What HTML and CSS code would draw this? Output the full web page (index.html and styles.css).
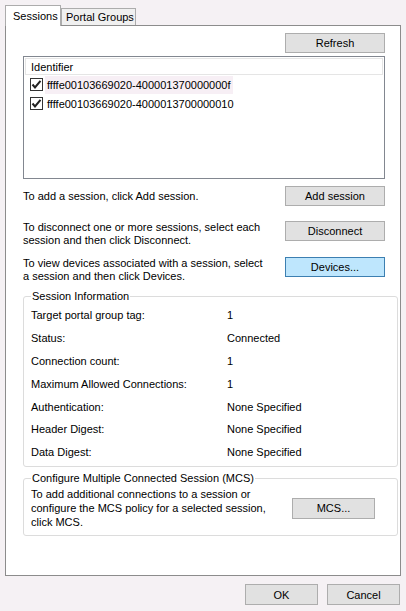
FILE: index.html
```html
<!DOCTYPE html>
<html>
<head>
<meta charset="utf-8">
<link rel="stylesheet" href="styles.css">
</head>
<body>
<div class="dialog">
  <div class="tabs">
    <div class="tab active">Sessions</div>
    <div class="tab">Portal Groups</div>
  </div>
  <div class="panel">
    <div class="toprow"><button class="btn">Refresh</button></div>
    <div class="list">
      <div class="list-header">Identifier</div>
      <div class="list-row hot">
        <span class="check"><svg width="11" height="11" viewBox="0 0 11 11"><path d="M1.5 5.5 L4 8.5 L9.5 1.8" fill="none" stroke="#222" stroke-width="2"/></svg></span>
        <span class="ident">ffffe00103669020-400001370000000f</span>
      </div>
      <div class="list-row">
        <span class="check"><svg width="11" height="11" viewBox="0 0 11 11"><path d="M1.5 5.5 L4 8.5 L9.5 1.8" fill="none" stroke="#222" stroke-width="2"/></svg></span>
        <span class="ident">ffffe00103669020-4000013700000010</span>
      </div>
    </div>
    <div class="action first">
      <p>To add a session, click Add session.</p>
      <button class="btn">Add session</button>
    </div>
    <div class="action two">
      <p>To disconnect one or more sessions, select each<br>session and then click Disconnect.</p>
      <button class="btn">Disconnect</button>
    </div>
    <div class="action two tight">
      <p>To view devices associated with a session, select<br>a session and then click Devices.</p>
      <button class="btn focus">Devices...</button>
    </div>
    <fieldset class="group info">
      <legend>Session Information</legend>
      <div class="kv"><span>Target portal group tag:</span><span>1</span></div>
      <div class="kv"><span>Status:</span><span>Connected</span></div>
      <div class="kv"><span>Connection count:</span><span>1</span></div>
      <div class="kv"><span>Maximum Allowed Connections:</span><span>1</span></div>
      <div class="kv"><span>Authentication:</span><span>None Specified</span></div>
      <div class="kv"><span>Header Digest:</span><span>None Specified</span></div>
      <div class="kv"><span>Data Digest:</span><span>None Specified</span></div>
    </fieldset>
    <fieldset class="group mcs">
      <legend>Configure Multiple Connected Session (MCS)</legend>
      <div class="mcs-row">
        <p>To add additional connections to a session or<br>configure the MCS policy for a selected session,<br>click MCS.</p>
        <button class="btn mcs-btn">MCS...</button>
      </div>
    </fieldset>
  </div>
  <div class="footer">
    <button class="btn small">OK</button>
    <button class="btn small">Cancel</button>
  </div>
</div>
</body>
</html>
```
FILE: styles.css
```css
* { box-sizing: border-box; }
html, body { margin: 0; padding: 0; }
body {
  background: #f5f1f4;
  font-family: "Liberation Sans", Arial, sans-serif;
  font-size: 11px;
  color: #000;
  width: 406px;
  height: 611px;
  overflow: hidden;
}
.dialog { padding: 5px 5px 0 5px; }
.tabs { display: flex; align-items: flex-end; height: 20px; position: relative; z-index: 1; }
.tab {
  height: 17px;
  width: 75px;
  border: 1px solid #acacac;
  border-bottom: none;
  background: #f0f0f0;
  padding: 1px 0 0 4px;
  line-height: 14px;
  white-space: nowrap;
}
.tab.active {
  height: 21px;
  width: 56px;
  background: #fff;
  margin-bottom: -1px;
  padding: 3px 0 0 7px;
}
.panel {
  background: #fff;
  border: 1px solid #8c8c8c;
  height: 551px;
  padding: 7px 2px 0 17px;
}
.toprow { display: flex; justify-content: flex-end; padding-right: 13px; }
.btn {
  font: inherit;
  width: 100px;
  height: 20px;
  background: #e1e1e1;
  border: 1px solid #adadad;
  color: #000;
  padding: 0;
}
.btn.focus { background: #bee6fd; border-color: #3c7fb1; }
.list {
  margin: 3px 13px 0 0;
  height: 123px;
  border: 1px solid #828790;
  padding: 1px;
}
.list-header {
  height: 17px;
  border: 1px solid #e5e5e5;
  padding: 1px 0 0 5px;
  line-height: 14px;
}
.list-row {
  height: 19px;
  display: flex;
  align-items: center;
  padding-left: 5px;
}
.check {
  width: 13px;
  height: 13px;
  border: 1px solid #333;
  background: #fff;
  display: flex;
  align-items: center;
  justify-content: center;
  margin-right: 2px;
}
.ident { padding: 2px 2px; line-height: 14px; }
.list-row.hot .ident { background: #f7eff5; }
.action {
  display: flex;
  align-items: center;
  justify-content: space-between;
  padding-right: 13px;
  margin-top: 15px;
}
.action.first { margin-top: 7px; }
.action.two { align-items: flex-start; }
.action.tight { margin-top: 10px; }
.action p { margin: 0; line-height: 13px; }
.group {
  margin: 7px 0 0 0;
  border: 1px solid #dcdcdc;
  border-radius: 3px;
  padding: 0 0 0 7px;
}
.group legend { padding: 0 1px; margin-left: 0; line-height: 13px; }
.info { height: 177px; }
.kv { display: flex; height: 22.8px; align-items: center; }
.kv span:first-child { width: 196px; }
.info .kv:first-of-type { margin-top: 1px; }
.mcs { margin-top: 5px; height: 64px; }
.mcs-row { display: flex; align-items: center; margin-top: 2px; }
.mcs-row p { margin: 0; width: 261px; line-height: 14px; }
.mcs-btn { width: 83px; height: 21px; }
.footer { display: flex; justify-content: flex-end; gap: 9px; padding: 8px 1px 0 0; }
.btn.small { width: 73px; height: 21px; }
```
